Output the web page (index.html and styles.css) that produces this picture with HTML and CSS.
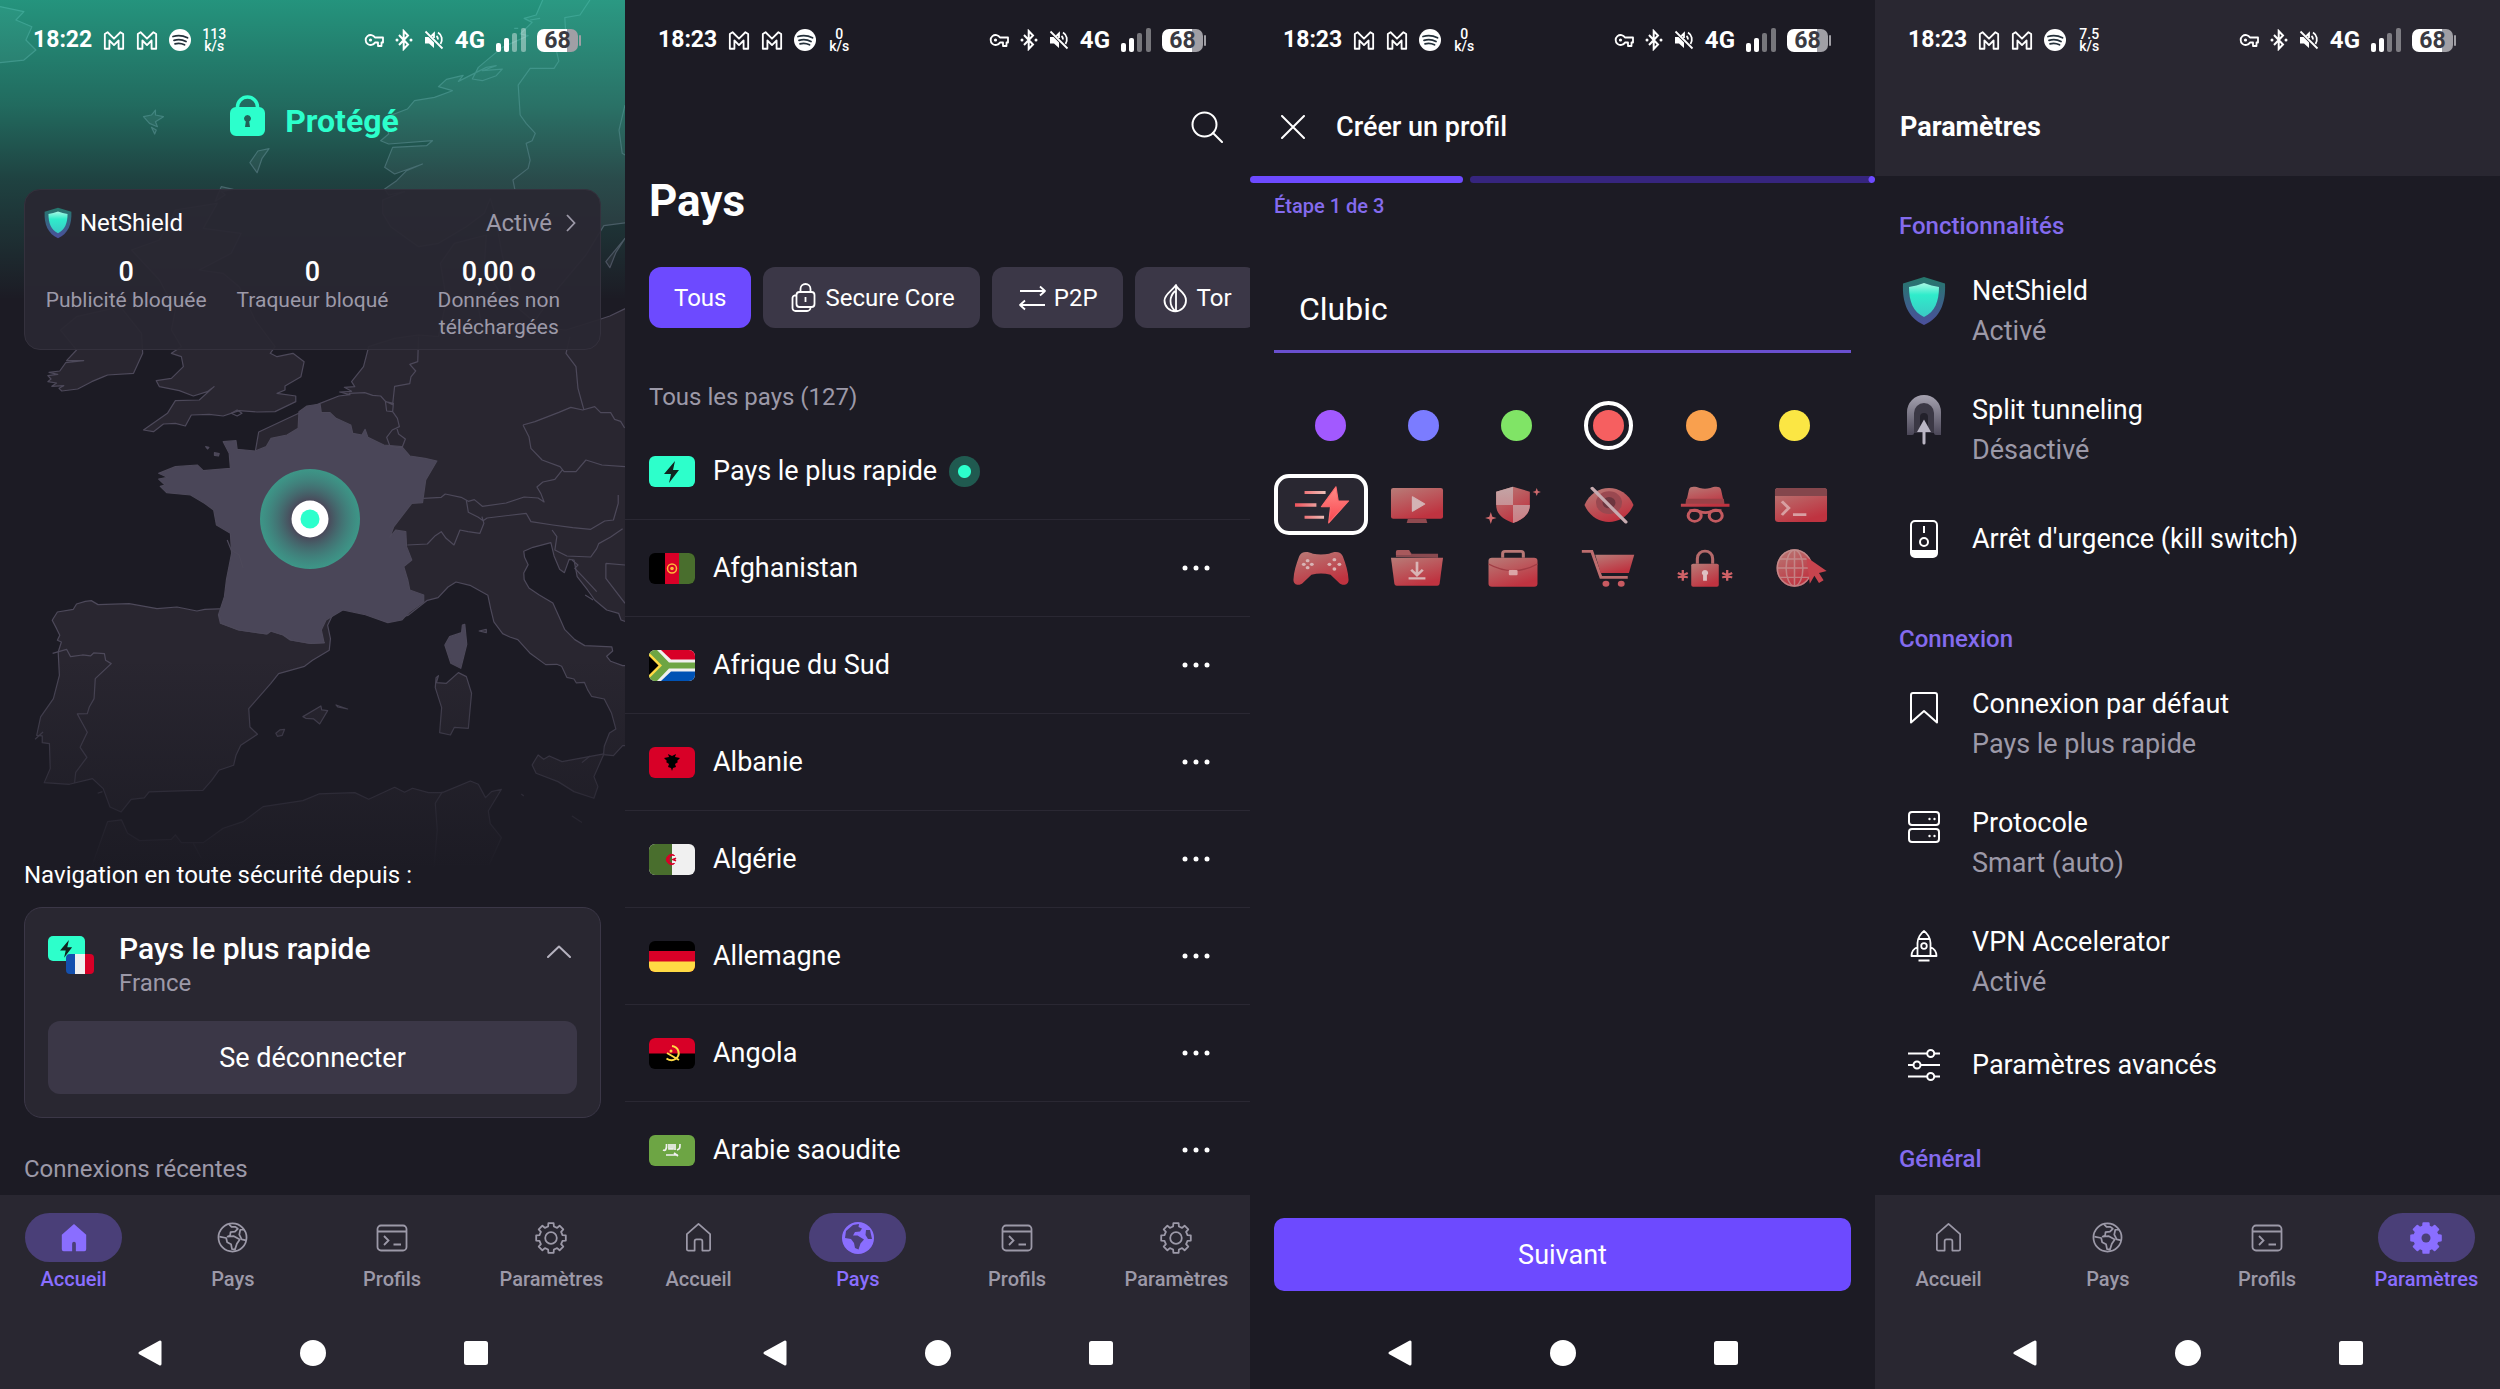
FILE: index.html
```html
<!DOCTYPE html>
<html lang="fr">
<head>
    <meta charset="UTF-8">
    <meta name="viewport" content="width=device-width, initial-scale=1.0">
    <title>Proton VPN</title>
    <link rel="stylesheet" href="styles.css">
</head>
<body>
    <!-- Shared icons -->
    <svg class="sprite" aria-hidden="true">
        <defs>
            <linearGradient id="shieldOuter" x1="0" y1="0" x2="0" y2="1"><stop offset="0" stop-color="#25786c"/><stop offset="1" stop-color="#4b4f9c"/></linearGradient>
            <linearGradient id="shieldInner" x1="0" y1="0" x2="0" y2="1"><stop offset="0" stop-color="#a9f7e4"/><stop offset=".35" stop-color="#2feccb"/><stop offset="1" stop-color="#3bc9c4"/></linearGradient>
            <linearGradient id="tunnel" x1="0" y1="0" x2="0" y2="1"><stop offset="0" stop-color="#a5a2b0"/><stop offset="1" stop-color="#4b4758"/></linearGradient>
            <linearGradient id="red" x1="0" y1="0" x2=".5" y2="1"><stop offset="0" stop-color="#b87c78"/><stop offset="1" stop-color="#bf3340"/></linearGradient>
            <linearGradient id="pink" x1="0" y1="0" x2="0" y2="1"><stop offset="0" stop-color="#c3a5a6"/><stop offset="1" stop-color="#cb7d83"/></linearGradient>
            <linearGradient id="bolt" x1="0" y1="0" x2="0" y2="1"><stop offset="0" stop-color="#ff8d88"/><stop offset="1" stop-color="#f9454f"/></linearGradient>
            <linearGradient id="speed" x1="0" y1="0" x2="1" y2="0"><stop offset="0" stop-color="#f0525b"/><stop offset="1" stop-color="#ecc0b9"/></linearGradient>
        </defs>

        <symbol id="i-gmail" viewBox="0 0 24 22"><path d="M2 20V4l3-2 7 7 7-7 3 2v16h-5V11l-5 5-5-5v9z" fill="none" stroke="currentColor" stroke-width="2" stroke-linejoin="round"/></symbol>
        <symbol id="i-spotify" viewBox="0 0 22 22"><circle cx="11" cy="11" r="11" fill="currentColor"/><path d="M4 7.500c5-1.500 10-1 14.500 1.300M5 11.300c4-1.200 8.500-.8 12 1.200M6 14.800c3.500-.9 6.500-.6 9.500 1" fill="none" stroke="#24303a" stroke-width="1.800" stroke-linecap="round"/></symbol>
        <symbol id="i-key" viewBox="0 0 20 16"><path d="M11 5.500A5 5 0 1 0 11 10.500h3V14h3.500v-3.500H19v-5z" fill="none" stroke="currentColor" stroke-width="1.800" stroke-linejoin="round"/><circle cx="6.500" cy="8" r="1.600" fill="currentColor"/></symbol>
        <symbol id="i-bluetooth" viewBox="0 0 18 22"><path d="M4 6l9 9.500-4.300 4.500V2L13 6.500 4 16" fill="none" stroke="currentColor" stroke-width="2"/><circle cx="2" cy="11" r="1.500" fill="currentColor"/><circle cx="16" cy="11" r="1.500" fill="currentColor"/></symbol>
        <symbol id="i-mute" viewBox="0 0 20 20"><path d="M1 7h3.500L10 12.500V18l-5-4.500H1z" fill="currentColor"/><path d="M1.500 1.500l17 17M12.500 6c1 .8 1.500 2 1.500 3.500M14 2.500c4 2.500 5 7.500 2.500 11.500M7.500 6 10 3.500V8" fill="none" stroke="currentColor" stroke-width="1.800"/></symbol>
        <symbol id="i-signal" viewBox="0 0 30 24"><rect x="0" y="15" width="5" height="9" rx="2" fill="currentColor"/><rect x="8" y="10" width="5" height="14" rx="2" fill="currentColor"/><rect x="16" y="5" width="5" height="19" rx="2" fill="currentColor" opacity=".4"/><rect x="25" y="0" width="5" height="24" rx="2" fill="currentColor" opacity=".4"/></symbol>

        <symbol id="i-lock" viewBox="0 0 35 52"><path d="M7.500 15v-3a10 10 0 0 1 20 0v3" fill="none" stroke="currentColor" stroke-width="3.500"/><path fill-rule="evenodd" d="M6 12h23a6 6 0 0 1 6 6v17a6 6 0 0 1-6 6H6a6 6 0 0 1-6-6V18a6 6 0 0 1 6-6zm11.500 8a3.500 3.500 0 0 0-1.700 6.500L15 32h5l-.8-5.500A3.500 3.500 0 0 0 17.500 20z" fill="currentColor"/></symbol>
        <symbol id="i-shield" viewBox="0 0 44 50"><path d="M22 1 43 7.500C44 27 38 42 22 49 6 42 0 27 1 7.500z" fill="url(#shieldOuter)"/><path d="M22 7c5 2 10 3 15 4 0 14-4 25-15 30C11 36 7 25 7 11c5-1 10-2 15-4z" fill="url(#shieldInner)"/></symbol>
        <symbol id="i-right" viewBox="0 0 10 18"><path d="M1 1l7.500 8L1 17" fill="none" stroke="currentColor" stroke-width="1.800"/></symbol>
        <symbol id="i-up" viewBox="0 0 24 13"><path d="M1 12 12 1.500 23 12" fill="none" stroke="currentColor" stroke-width="2" stroke-linecap="round" stroke-linejoin="round"/></symbol>
        <symbol id="i-search" viewBox="0 0 32 32"><circle cx="13.500" cy="13.500" r="12" fill="none" stroke="currentColor" stroke-width="2"/><path d="M22 22l9 9" stroke="currentColor" stroke-width="2" stroke-linecap="round"/></symbol>
        <symbol id="i-close" viewBox="0 0 24 24"><path d="M1 1l22 22M23 1 1 23" stroke="currentColor" stroke-width="2" stroke-linecap="round"/></symbol>
        <symbol id="i-more" viewBox="0 0 28 6"><circle cx="3" cy="3" r="2.500" fill="currentColor"/><circle cx="14" cy="3" r="2.500" fill="currentColor"/><circle cx="25" cy="3" r="2.500" fill="currentColor"/></symbol>

        <symbol id="i-core" viewBox="0 0 30 30"><g fill="none" stroke="currentColor" stroke-width="1.800"><rect x="8.500" y="9" width="18" height="15" rx="3"/><path d="M12.500 9V6a5 5 0 0 1 10 0v3M8 12.500H6.500a3 3 0 0 0-2 3V25a3 3 0 0 0 3 3H19a3.500 3.500 0 0 0 3.500-3.500M17.500 14v5"/></g></symbol>
        <symbol id="i-p2p" viewBox="0 0 30 30"><path d="M3 8h25M23 3.500 28 8l-5 4.500M28 22H3M8 17.500 3 22l5 4.500" fill="none" stroke="currentColor" stroke-width="1.800" stroke-linejoin="round"/></symbol>
        <symbol id="i-tor" viewBox="0 0 30 30"><path d="M16 2c1 5 10 7 10 15.500a10.700 10.700 0 0 1-21.500 0C4.500 11 12 8 16 2zM16 2v26M15 8c-6 6-6 14 0 20" fill="none" stroke="currentColor" stroke-width="1.800" stroke-linejoin="round"/></symbol>

        <symbol id="i-home" viewBox="0 0 32 32"><path d="M4 12.500 16 2l12 10.500V28a1.500 1.500 0 0 1-1.500 1.500H20V20a2 2 0 0 0-2-2h-4a2 2 0 0 0-2 2v9.500H5.500A1.500 1.500 0 0 1 4 28z" fill="none" stroke="currentColor" stroke-width="1.800" stroke-linejoin="round"/></symbol>
        <symbol id="i-home-on" viewBox="0 0 32 32"><path d="M3 12.500 16 1l13 11.500V28a2 2 0 0 1-2 2h-9v-8a2 2 0 0 0-4 0v8H5a2 2 0 0 1-2-2z" fill="currentColor"/></symbol>
        <symbol id="i-globe" viewBox="0 0 32 32"><g fill="none" stroke="currentColor" stroke-width="1.800" stroke-linejoin="round"><circle cx="16" cy="16" r="14.500"/><path d="M12.500 2.500 15 5h4l2.500 2-3 3-4.500.5-.5 3.500-2.500 1 6-.5 6.500 3.500-3 4.500-2 6-3-.5-1-5-4-2-1-4.500-7-1.500M28 8h-4l-1 5 2.500 5 4.500 1"/></g></symbol>
        <symbol id="i-globe-on" viewBox="0 0 32 32"><circle cx="16" cy="16" r="16" fill="currentColor"/><path d="M17 2l-6 1-7 6-1 7 6 1 3 4 1 5 3.500 1.500 2-6 3.500-4-6.500-4H11l2-3.500 5-.5 2-3-3.500-1.500zM28 8h-4l-.5 5 2.500 4h4z" fill="#4a3f78"/></symbol>
        <symbol id="i-terminal" viewBox="0 0 32 32"><g fill="none" stroke="currentColor" stroke-width="1.800"><rect x="1.500" y="3.500" width="29" height="25" rx="3.500"/><path d="M1.500 9.500h29M8 14l4.500 4.500L8 23M17.500 22.500H25"/></g></symbol>
        <symbol id="i-gear" viewBox="-16 -16 32 32"><path d="M-2.900-11.500-2.600-14.800H2.600L2.900-11.500 6.100-10.100 8.600-12.300 12.300-8.600 10.100-6.100 11.500-2.900 14.800-2.600V2.600L11.500 2.900 10.100 6.100 12.300 8.600 8.600 12.300 6.100 10.100 2.900 11.500 2.600 14.800H-2.600L-2.900 11.500-6.100 10.100-8.600 12.300-12.300 8.600-10.100 6.100-11.500 2.900-14.800 2.600V-2.600L-11.500-2.900-10.100-6.100-12.300-8.600-8.600-12.300-6.100-10.100z" fill="none" stroke="currentColor" stroke-width="1.800" stroke-linejoin="round"/><circle r="5.800" fill="none" stroke="currentColor" stroke-width="1.800"/></symbol>
        <symbol id="i-gear-on" viewBox="-16 -16 32 32"><path d="M-2.900-11.500-2.600-14.800H2.600L2.900-11.500 6.100-10.100 8.600-12.300 12.300-8.600 10.100-6.100 11.500-2.900 14.800-2.600V2.600L11.500 2.900 10.100 6.100 12.300 8.600 8.600 12.300 6.100 10.100 2.900 11.500 2.600 14.800H-2.600L-2.900 11.500-6.100 10.100-8.600 12.300-12.300 8.600-10.100 6.100-11.500 2.900-14.800 2.600V-2.600L-11.500-2.900-10.100-6.100-12.300-8.600-8.600-12.300-6.100-10.100z" fill="currentColor" stroke="currentColor" stroke-width="2" stroke-linejoin="round"/><circle r="4.500" fill="#4a3f78"/></symbol>

        <symbol id="i-back" viewBox="0 0 26 28"><path d="M3 14 23 3v22z" fill="currentColor" stroke="currentColor" stroke-width="3" stroke-linejoin="round"/></symbol>
        <symbol id="i-circle" viewBox="0 0 26 26"><circle cx="13" cy="13" r="13" fill="currentColor"/></symbol>
        <symbol id="i-square" viewBox="0 0 26 26"><rect x="1" y="1" width="24" height="24" rx="2.500" fill="currentColor"/></symbol>

        <symbol id="i-tunnel" viewBox="0 0 34 50"><path d="M0 40V17a17 17 0 0 1 34 0v23h-5a2 2 0 0 1-2-2H7a2 2 0 0 1-2 2z" fill="url(#tunnel)"/><path d="M7 40V18a10 10 0 0 1 20 0v22z" fill="#3b3845"/><path d="M13 34V22a4 4 0 0 1 8 0v12z" fill="#23212b"/><path d="M7 38h20v4H7z" fill="#1c1b24"/><path d="M17 24.500 24 37h-5.500v11a1.500 1.500 0 0 1-3 0V37H10z" fill="#bab6c4"/></symbol>
        <symbol id="i-kill" viewBox="0 0 28 38"><rect x="1" y="1" width="26" height="36" rx="4" fill="none" stroke="currentColor" stroke-width="2"/><path d="M1 30h26v4a3 3 0 0 1-3 3H4a3 3 0 0 1-3-3zM13 6h2v7h-2z" fill="currentColor"/><circle cx="14" cy="22" r="4" fill="none" stroke="currentColor" stroke-width="2"/></symbol>
        <symbol id="i-bookmark" viewBox="0 0 28 32"><path d="M1 30.500V3a2 2 0 0 1 2-2h22a2 2 0 0 1 2 2v27.500L14 19z" fill="none" stroke="currentColor" stroke-width="2" stroke-linejoin="round"/></symbol>
        <symbol id="i-servers" viewBox="0 0 32 32"><g fill="none" stroke="currentColor" stroke-width="2"><rect x="1" y="1" width="30" height="13" rx="3"/><rect x="1" y="18" width="30" height="13" rx="3"/></g><g fill="currentColor"><circle cx="21.500" cy="8" r="1.200"/><circle cx="26.500" cy="8" r="1.200"/><circle cx="21.500" cy="25" r="1.200"/><circle cx="26.500" cy="25" r="1.200"/></g></symbol>
        <symbol id="i-rocket" viewBox="0 0 28 32"><g fill="none" stroke="currentColor" stroke-width="1.800" stroke-linejoin="round"><path d="M7.500 26V13C7.500 8 11 3 14 1c3 2 6.500 7 6.500 12v13zM9 9h10M7.500 17C4 18.500 1.500 21 1.500 26h6M20.500 17c3.500 1.500 6 4 6 9h-6M8.500 30.500h11"/><circle cx="14" cy="16" r="2.800"/></g></symbol>
        <symbol id="i-sliders" viewBox="0 0 32 32"><g fill="none" stroke="currentColor" stroke-width="2"><path d="M0 4.500h19M26 4.500h6M0 16h5.500M12.500 16H32M0 27.500h19M26 27.500h6"/><circle cx="22.700" cy="4.500" r="3.500"/><circle cx="9" cy="16" r="3.500"/><circle cx="22.700" cy="27.500" r="3.500"/></g></symbol>

        <symbol id="f-fast" viewBox="0 0 46 31"><path d="M0 0h46v31H0z" fill="#2dffcb"/><path d="M26 5 15 18h7l-2 9 10-13h-6z" fill="#10251f"/></symbol>
        <symbol id="f-fr" viewBox="0 0 28 20"><path d="M0 0h10v20H0z" fill="#1450ae"/><path d="M9 0h10v20H9z" fill="#f0f0f0"/><path d="M19 0h9v20h-9z" fill="#d80027"/></symbol>
        <symbol id="f-af" viewBox="0 0 46 31"><path d="M0 0h46v31H0z"/><path d="M16 0h14v31H16z" fill="#d80027"/><path d="M30 0h16v31H30z" fill="#496e2d"/><circle cx="23" cy="15.500" r="4.500" fill="none" stroke="#ffb43a" stroke-width="1.500"/><circle cx="23" cy="15.500" r="1.800" fill="#ffb43a"/></symbol>
        <symbol id="f-za" viewBox="0 0 46 31"><path d="M0 0h46v31H0z" fill="#f0f0f0"/><path d="M12 0h34v9.500H22z" fill="#d80027"/><path d="M12 31h34v-9.500H22z" fill="#0052b4"/><path d="M0 0h8l12 12.500h26v6H20L8 31H0z" fill="#6da544"/><path d="M0 2.500 13 15.500 0 28.500z" fill="#ffda44"/><path d="M0 6l9.500 9.500L0 25z"/></symbol>
        <symbol id="f-al" viewBox="0 0 46 31"><path d="M0 0h46v31H0z" fill="#d80027"/><path d="M19 7l2 1 2 1 2-1 2-1-1 3 5 1-3 3 1 1-3 2 1 3-3 1-1 3-1-3-3-1 1-3-3-2 1-1-3-3 5-1z"/></symbol>
        <symbol id="f-dz" viewBox="0 0 46 31"><path d="M0 0h46v31H0z" fill="#f0f0f0"/><path d="M0 0h23v31H0z" fill="#496e2d"/><path d="M25.500 11.500a5 5 0 1 0 0 8 4.200 4.200 0 1 1 0-8z" fill="#d80027" stroke="#d80027"/><path d="M23 15.500l4-1.500-1 1.500 1 1.500z" fill="#d80027" stroke="#d80027"/></symbol>
        <symbol id="f-de" viewBox="0 0 46 31"><path d="M0 0h46v31H0z"/><path d="M0 10h46v21H0z" fill="#d80027"/><path d="M0 20.500h46V31H0z" fill="#ffda44"/></symbol>
        <symbol id="f-ao" viewBox="0 0 46 31"><path d="M0 0h46v31H0z"/><path d="M0 0h46v15.500H0z" fill="#d80027"/><path d="M23 8c7 1 9 9 3.500 13-3 2-6 1.500-9-.5M18 15l12 7" fill="none" stroke="#ffda44" stroke-width="2"/><circle cx="22" cy="13" r="1.500" fill="#ffda44"/></symbol>
        <symbol id="f-sa" viewBox="0 0 46 31"><path d="M0 0h46v31H0z" fill="#6da544"/><path d="M14 15c2 1 4 0 3.500-6M20 9v5h4V9M22 9v5M26 9v6M31 9c0 4 0 5-3 6M17 20h12M25 18l4 3" fill="none" stroke="#f0f0f0" stroke-width="1.700"/></symbol>
    </svg>

    <div class="screens">

        <!-- Accueil -->
        <section class="phone home">
            <!-- Europe map behind the page -->
            <svg class="map" viewBox="0 0 625 868" preserveAspectRatio="xMidYMin slice" aria-hidden="true">
                <defs>
                    <linearGradient id="mapTop" x1="0" y1="0" x2="0" y2="1"><stop offset="0" stop-color="#2cffcc" stop-opacity=".53"/><stop offset=".35" stop-color="#2cffcc" stop-opacity=".35"/><stop offset=".6" stop-color="#2cffcc" stop-opacity=".17"/><stop offset="1" stop-color="#2cffcc" stop-opacity="0"/></linearGradient>
                    <linearGradient id="mapBottom" x1="0" y1="0" x2="0" y2="1"><stop offset="0" stop-color="#1c1b24" stop-opacity="0"/><stop offset="1" stop-color="#1c1b24"/></linearGradient>
                    <radialGradient id="pulse"><stop offset=".35" stop-color="#2cffcc" stop-opacity="0"/><stop offset="1" stop-color="#35c7a4" stop-opacity=".62"/></radialGradient>
                </defs>
                <g class="land" transform="translate(0 350) scale(.3986 .3333)">
                    <path d="M803 160l47-22 28-4-26-8 30-2-18-12 26-2-8-15 30-45 13-60 65-25 60-10 50 5 20-110-15-110 35-60 80-25-5 95 35 70-50 50 10 70 90-10 120 10 80-30 30-12 40-23h60V815h-60l-12-5-6-20-30-10-30-30-18-30-26-40-8-50-12-2-12 40-12-10-14-40-8-40-45 14-23 12 2 18 9 22-11 25 1 20 12 25 25 20 35 25 15 40 15 40 25 30 25 18 68 4 2 12-15 16 10 15 30 13h60v240h-60l-23 30-25-3 2-25 13-40 16-12-11-48-18-42-32-8-10-20-8-22-20 2-6-12-18-5-13-33-12-6-28 1-40-35-30-40-20-8-18-10-22-35-8-40-7-40-45-30-35-10-20 15-25 32-27 8-48 45-35 8-60-25-53-13-42 30-12 30 7 40-3 35-42 30-20 18-65 22-8 12-12 18-55 75 3 55 19 22-42 33-12 30-6 30-37 15-18 30-22 30-40 1-95 4-12 18-33 4-25 38-28-15-17-55-27-30-58 17-63-5 15-42-2-75-18-3v-20l-14-2 10-55 32-55 15-70-3-70 8-30-10-5 6-15-8-20-11-25 13-25 40-8 8-16 22-8 15-2 17 12 78-3 70 15 50-5 50 12 20-5 50-2 15-50 70-480z"/>
                    <path d="M360 240l25 5 25-23 30-2 25 8 15-33 45-2 35 5 40-16 45 4 45-1 52-30v-17l-47-8 20-10v-12l40-28 8-45-28-25-40 10-17-10 12-20-50-80-40-100-40-40-60-10 80-50 25-60-95-15 35-75-105 20-40 90-70 30 70 90 40 90-10 60 25 50-25 20 25 10 5 30-30 35-38 7 8 18 50 12 35 16 35-13 17-15-37 40-60 2-20 38z"/>
                    <path d="M355-50l3 60-23 60-65 5-10 5-30 15-35 22-40 6-7-8 12-8-30 2 12-10-22-4 8-8-8-10 25-4-22-6 27-4 15-25 45-6-43 0 25-32-40-60 40-40 110-30z"/>
                    <path d="M1095 998l25 2 30-32 20 12 13 50-8 105-35-3-10 23-27-7 5-75-16-60 2-30 6-6z"/>
                    <path d="M1350 1215l14 13 14-10 32 17 105-23-25 68 10 30-10 35-50-20-40-30-55-25-10-25zM760 1100l45-32 2 12 15 2-20 40-15-15-20-2zM843 1065l29 12-25-6zM692 1150l10-10 12-2-6 18-12 3zM1202 843l18-5v10z"/>
                    <path d="M230 1550l40-135 35-5 15 40 30 22 80-4 10-13 15 23h55l50-43 50-20 50-45 100-18 40-20 90-4 35 20 65-36 25 15 20-12 40 13h35l70-35 20 10 18 40 15-18 25-7-33 65 5 38 28 42-30 80z"/>
                    <g transform="translate(0 -1050)">
                        <path d="M-20 15l20 5 60 15-20 25 40 20-15 40 25 30-30 30-60 8-20 2zM360 350l20-5 10-15v15l20 5-20 15 5 15-20-10zM380 382l12 8-4 12zM627 488l20-35 28-7-18 30-12 42zM555 560l30 8-30 6 10 10-25 20z"/>
                        <path d="M1365-10l-20 55-30 10 20 12-30 35 20 5-65 35-60 60-15 35 25 5 35-15 15-20-50 5 35-15-25 5-70 42 12-18-42 12-20 22 35 12-45 20-50 10-18 25-55 25 8 50-20 20 20 10 110-10-15 15-85 5-20 60 25 20 70-30-40 20-25 30-30 25 10 18 40-10-55 25v40l20 40 70 60 50-10 70-50 45-40 15-45 10 40 20 130 30 150 50 50 60-100 70-100 45-88 62-10h60V-10z"/>
                        <path d="M1568 715l-38 55-10 15 10 18 15-45z"/>
                    </g>
                    <path class="france" d="M803 162l-33 6-20 17-2 50-28 20-40 10-12 25-28 13-45-5-3-26-32 3 15 35 3 45-68 7-15-17-55 5-42 20 22 12-22 5 16 18-12 4 16 19 60 7 35 25 23 20 7 45 35 25 3 60-13 80-5 50-15 55 5 25 45 20 70 12 10-9 32 12 18 15 50 10 35-2-7-38 12-30 42-30 53 13 60 25 35-8 20-25 35-30v-20l-35-15-5-30-10-40 20-20-13-40-2-45-25-5-15 22 10-32 45-70 27-2 8-68 28-57-30-8-38-7-20-28-45-5-40-23-7-24-8 17-23-5-5-25-37-20-15-17-22-1zM1160 825l6-2 5 60-15 72-25-15-15-55 12-25 30-12zM516 290l8 2-3 5zM538 308l12 3-2 7-10-2z"/>
                    <path class="border" d="M550 795l5 25 45 20 70 12 10-9 32 12 18 15 50 10 35-2M132 910l35-12 10 22 30-5 20 3 8-9 27 2 3 20 14 10-40 45-3 60-12 25-5 20-25 1 25 55-18 45 17 30-28 45-3 32M245 1330l12-5M875 130l40-2 20 8 20 2 12 16 18 10 5-55 38-8 3-20 12-18-15-20 20-8 2-75M967 155l20 5-2 25-15-2zM985 185l12 20 5 25-18 10-14 22 8 26 16 4 15 0 8-25-17-15-5-20M1062 445l45-3 10-10 40 10 18 12 15-5 20 20 60-10 45-18 35 3 15 12-8-25-10-20 15-15 30-8 20-30M1170 452l5 35 25 15 12 10 10-8 98-14 12 25 55 10 50 8 45 5 35-25 22-3 12-50v-25M1312 225l30-10 60-28 30-15 30 8 30-10 15 18 25 0 10 20 15 6 10 20M1465 180l-15-65-5-65-25-40 10-50M1312 225l15 35 5 35 28 35 45 20 10 15 30 0 25-35 40 15 60 5M1022 585l50-3 20-25 15-12 12 20 20 20 15-45 20 5 30 5 10-30-5-20M1385 540l12 20-5 40 30 18 60 3 15-25 5-15 30-20 30-25M1520 640l48 5M1520 640v45l48 75M1110 1325l-18 35 5 80-8 110M485 1480l20 45"/>
                    <path class="border" d="M570 570l10 30 20 15 10 40M1435 630l15 15-8 10 20 25 35 45M1468 735l20 15M1480 1218l-20 20M88 1168l20-22M1435 1398l25 20M1308 1332l6 6M580 190l15-10 12 10-12 8z"/>
                    <g transform="translate(0 -1050)"><path class="border" d="M1480 0l-25 45-38 8 2 40-25 50 8 40-12 22-60 0-30 50 5 90 15 25 23 30-8 22-15 8 10 50-5 25-38 35 5 30M1568 315l-15 75 8 70 7 5M1330 60l25-5M1290 85l10 0"/></g>
                </g>
                <rect width="625" height="300" fill="url(#mapTop)"/>
                <rect y="660" width="625" height="208" fill="url(#mapBottom)"/>
                <circle cx="310" cy="519" r="50" fill="url(#pulse)"/>
                <circle cx="310" cy="519" r="18.500" fill="#fff"/>
                <circle cx="310" cy="519" r="9.500" fill="#2cffcc"/>
            </svg>

            <div class="status">
                <span class="time">18:22</span>
                <svg width="22" height="21"><use href="#i-gmail"/></svg>
                <svg width="22" height="21"><use href="#i-gmail"/></svg>
                <svg width="22" height="22"><use href="#i-spotify"/></svg>
                <span class="speed">113<br>k/s</span>
                <svg class="push" width="20" height="16"><use href="#i-key"/></svg>
                <svg width="18" height="22"><use href="#i-bluetooth"/></svg>
                <svg width="20" height="20"><use href="#i-mute"/></svg>
                <span class="network">4G</span>
                <svg width="30" height="24"><use href="#i-signal"/></svg>
                <span class="battery">68</span>
            </div>

            <main class="content">
                <div class="protected"><svg width="35" height="52"><use href="#i-lock"/></svg><h1>Protégé</h1></div>
                <section class="netshield">
                    <div class="netshield-head">
                        <svg width="28" height="32"><use href="#i-shield"/></svg>
                        <span>NetShield</span>
                        <a href="#netshield">Activé <svg width="10" height="18"><use href="#i-right"/></svg></a>
                    </div>
                    <div class="stats">
                        <div><strong>0</strong><span>Publicité bloquée</span></div>
                        <div><strong>0</strong><span>Traqueur bloqué</span></div>
                        <div><strong>0,00 o</strong><span>Données non<br>téléchargées</span></div>
                    </div>
                </section>

                <p class="from">Navigation en toute sécurité depuis :</p>
                <section class="connection">
                    <div class="connection-head">
                        <div class="flags">
                            <svg class="flag-fast" width="37" height="25"><use href="#f-fast"/></svg>
                            <svg class="flag-small" width="28" height="20"><use href="#f-fr"/></svg>
                        </div>
                        <div>
                            <h2>Pays le plus rapide</h2>
                            <p>France</p>
                        </div>
                        <button class="icon-btn" aria-label="Déplier"><svg width="24" height="13"><use href="#i-up"/></svg></button>
                    </div>
                    <button class="btn btn-weak">Se déconnecter</button>
                </section>
                <p class="recent">Connexions récentes</p>
            </main>

            <nav class="tabs">
                <a class="tab active" href="#accueil"><span class="pill"><svg width="30" height="30"><use href="#i-home-on"/></svg></span>Accueil</a>
                <a class="tab" href="#pays"><span class="pill"><svg width="31" height="31"><use href="#i-globe"/></svg></span>Pays</a>
                <a class="tab" href="#profils"><span class="pill"><svg width="32" height="32"><use href="#i-terminal"/></svg></span>Profils</a>
                <a class="tab" href="#parametres"><span class="pill"><svg width="32" height="32"><use href="#i-gear"/></svg></span>Paramètres</a>
            </nav>
            <div class="system">
                <button class="icon-btn" aria-label="Retour"><svg width="26" height="28"><use href="#i-back"/></svg></button>
                <button class="icon-btn" aria-label="Écran d'accueil"><svg width="26" height="26"><use href="#i-circle"/></svg></button>
                <button class="icon-btn" aria-label="Applications"><svg width="26" height="26"><use href="#i-square"/></svg></button>
            </div>
        </section>

        <!-- Pays -->
        <section class="phone">
            <div class="status">
                <span class="time">18:23</span>
                <svg width="22" height="21"><use href="#i-gmail"/></svg>
                <svg width="22" height="21"><use href="#i-gmail"/></svg>
                <svg width="22" height="22"><use href="#i-spotify"/></svg>
                <span class="speed">0<br>k/s</span>
                <svg class="push" width="20" height="16"><use href="#i-key"/></svg>
                <svg width="18" height="22"><use href="#i-bluetooth"/></svg>
                <svg width="20" height="20"><use href="#i-mute"/></svg>
                <span class="network">4G</span>
                <svg width="30" height="24"><use href="#i-signal"/></svg>
                <span class="battery">68</span>
            </div>

            <main class="content">
                <div class="bar bar-end"><button class="icon-btn" aria-label="Rechercher"><svg width="32" height="32"><use href="#i-search"/></svg></button></div>
                <h1 class="title">Pays</h1>
                <div class="chips">
                    <button class="chip selected">Tous</button>
                    <button class="chip"><svg width="30" height="30"><use href="#i-core"/></svg>Secure Core</button>
                    <button class="chip"><svg width="30" height="30"><use href="#i-p2p"/></svg>P2P</button>
                    <button class="chip"><svg width="30" height="30"><use href="#i-tor"/></svg>Tor</button>
                </div>
                <h2 class="count">Tous les pays (127)</h2>
                <ul class="countries">
                    <li><svg class="flag" width="46" height="31"><use href="#f-fast"/></svg>Pays le plus rapide<span class="live"></span></li>
                    <li><svg class="flag" width="46" height="31"><use href="#f-af"/></svg>Afghanistan<button class="icon-btn" aria-label="Plus"><svg width="28" height="6"><use href="#i-more"/></svg></button></li>
                    <li><svg class="flag" width="46" height="31"><use href="#f-za"/></svg>Afrique du Sud<button class="icon-btn" aria-label="Plus"><svg width="28" height="6"><use href="#i-more"/></svg></button></li>
                    <li><svg class="flag" width="46" height="31"><use href="#f-al"/></svg>Albanie<button class="icon-btn" aria-label="Plus"><svg width="28" height="6"><use href="#i-more"/></svg></button></li>
                    <li><svg class="flag" width="46" height="31"><use href="#f-dz"/></svg>Algérie<button class="icon-btn" aria-label="Plus"><svg width="28" height="6"><use href="#i-more"/></svg></button></li>
                    <li><svg class="flag" width="46" height="31"><use href="#f-de"/></svg>Allemagne<button class="icon-btn" aria-label="Plus"><svg width="28" height="6"><use href="#i-more"/></svg></button></li>
                    <li><svg class="flag" width="46" height="31"><use href="#f-ao"/></svg>Angola<button class="icon-btn" aria-label="Plus"><svg width="28" height="6"><use href="#i-more"/></svg></button></li>
                    <li><svg class="flag" width="46" height="31"><use href="#f-sa"/></svg>Arabie saoudite<button class="icon-btn" aria-label="Plus"><svg width="28" height="6"><use href="#i-more"/></svg></button></li>
                </ul>
            </main>

            <nav class="tabs">
                <a class="tab" href="#accueil"><span class="pill"><svg width="31" height="31"><use href="#i-home"/></svg></span>Accueil</a>
                <a class="tab active" href="#pays"><span class="pill"><svg width="32" height="32"><use href="#i-globe-on"/></svg></span>Pays</a>
                <a class="tab" href="#profils"><span class="pill"><svg width="32" height="32"><use href="#i-terminal"/></svg></span>Profils</a>
                <a class="tab" href="#parametres"><span class="pill"><svg width="32" height="32"><use href="#i-gear"/></svg></span>Paramètres</a>
            </nav>
            <div class="system">
                <button class="icon-btn" aria-label="Retour"><svg width="26" height="28"><use href="#i-back"/></svg></button>
                <button class="icon-btn" aria-label="Écran d'accueil"><svg width="26" height="26"><use href="#i-circle"/></svg></button>
                <button class="icon-btn" aria-label="Applications"><svg width="26" height="26"><use href="#i-square"/></svg></button>
            </div>
        </section>

        <!-- Créer un profil -->
        <section class="phone">
            <div class="status">
                <span class="time">18:23</span>
                <svg width="22" height="21"><use href="#i-gmail"/></svg>
                <svg width="22" height="21"><use href="#i-gmail"/></svg>
                <svg width="22" height="22"><use href="#i-spotify"/></svg>
                <span class="speed">0<br>k/s</span>
                <svg class="push" width="20" height="16"><use href="#i-key"/></svg>
                <svg width="18" height="22"><use href="#i-bluetooth"/></svg>
                <svg width="20" height="20"><use href="#i-mute"/></svg>
                <span class="network">4G</span>
                <svg width="30" height="24"><use href="#i-signal"/></svg>
                <span class="battery">68</span>
            </div>

            <main class="content">
                <div class="bar">
                    <button class="icon-btn close" aria-label="Fermer"><svg width="24" height="24"><use href="#i-close"/></svg></button>
                    <h1 class="bar-title">Créer un profil</h1>
                </div>
                <div class="progress" role="progressbar" aria-valuenow="1" aria-valuemax="3" aria-label="Étape"><span class="done"></span><span class="todo"></span></div>
                <form class="profile">
                    <label class="step" for="profile-name">Étape 1 de 3</label>
                    <input class="name" type="text" id="profile-name" value="Clubic">
                    <div class="colors">
                        <input type="radio" name="color" class="swatch violet" aria-label="Violet">
                        <input type="radio" name="color" class="swatch blue" aria-label="Bleu">
                        <input type="radio" name="color" class="swatch green" aria-label="Vert">
                        <input type="radio" name="color" class="swatch red" aria-label="Rouge" checked>
                        <input type="radio" name="color" class="swatch orange" aria-label="Orange">
                        <input type="radio" name="color" class="swatch yellow" aria-label="Jaune">
                    </div>
                    <div class="icons">
                        <label><input type="radio" name="icon" aria-label="Vitesse" checked>
                            <svg viewBox="0 0 64 48"><g transform="translate(32 24) scale(.3827 .3333) translate(-133 -345)"><path d="M172 290 134 350h24l-5 49 52-66h-27z" fill="url(#bolt)" stroke="#ff6b6e" stroke-width="3" stroke-linejoin="round"/><path d="M90 303h55v9H90zM65 340h56v10H65zM90 377h51v9H90z" fill="url(#speed)"/></g></svg></label>
                        <label><input type="radio" name="icon" aria-label="Streaming">
                            <svg viewBox="0 0 64 48"><g transform="translate(32 24) scale(.3827 .3333) translate(-384 -345)"><rect x="316" y="294" width="136" height="92" rx="6" fill="url(#red)"/><path d="M360 387h48l3 12h-54z" fill="#8f4a50"/><path d="M372 320l32 22-32 22z" fill="#d3b3b5" stroke="#d3b3b5" stroke-width="3" stroke-linejoin="round"/></g></svg></label>
                        <label><input type="radio" name="icon" aria-label="Protection">
                            <svg viewBox="0 0 64 48"><g transform="translate(32 24) scale(.3827 .3333) translate(-635 -345)"><path d="M635 290l44 15v40c0 25-15 42-44 54-29-12-44-29-44-54v-40z" fill="url(#red)"/><path d="M635 290v55h-44v-40zM635 345h44c0 25-15 42-44 54z" fill="url(#pink)"/><path d="M697 294l3 9 8 3-8 3-3 9-3-9-8-3 8-3zM577 366l4 14 11 4-11 4-4 14-4-14-11-4 11-4z" fill="#cf6a6d"/></g></svg></label>
                        <label><input type="radio" name="icon" aria-label="Confidentialité">
                            <svg viewBox="0 0 64 48"><g transform="translate(32 24) scale(.3827 .3333) translate(-886 -345)"><path d="M822 345c25-68 103-68 128 0-25 68-103 68-128 0z" fill="url(#red)"/><circle cx="886" cy="338" r="34" fill="#9a4850"/><circle cx="886" cy="338" r="17" fill="#6d363f"/><path d="M842 295l88 101" stroke="#c7abb0" stroke-width="9" stroke-linecap="round"/></g></svg></label>
                        <label><input type="radio" name="icon" aria-label="Anonyme">
                            <svg viewBox="0 0 64 48"><g transform="translate(32 24) scale(.3827 .3333) translate(-1137 -345)"><path d="M1087 341l8-42c3-12 18-9 28-5 10 3 18 3 28 0 10-4 25-7 28 5l8 42h14v9h-127v-9z" fill="url(#red)"/><path d="M1088 326h98l2 15h-102z" fill="#9b4147"/><g fill="none" stroke="#c45a60" stroke-width="8"><circle cx="1110" cy="377" r="17"/><circle cx="1165" cy="377" r="17"/><path d="M1096 362h16c10 0 12 6 26 6s16-6 26-6h16"/></g></g></svg></label>
                        <label><input type="radio" name="icon" aria-label="Terminal">
                            <svg viewBox="0 0 64 48"><g transform="translate(32 24) scale(.3827 .3333) translate(-1388 -345)"><rect x="1320" y="294" width="136" height="102" rx="9" fill="url(#red)"/><path d="M1320 318v-15q0-9 9-9h118q9 0 9 9v15z" fill="#84464c"/><path d="M1338 334l18 20-18 21M1367 374h35" fill="none" stroke="#d89fa2" stroke-width="8"/></g></svg></label>
                        <label><input type="radio" name="icon" aria-label="Jeux">
                            <svg viewBox="0 0 64 48"><g transform="translate(32 24) scale(.3827 .3333) translate(-133 -535)"><path d="M76 500c5-15 20-16 36-8 14 3 28 3 42 0 16-8 31-7 36 8 8 24 14 46 15 70 0 17-16 20-25 9l-22-24q-25-7-50 0l-22 24c-9 11-25 8-25-9 1-24 7-46 15-70z" fill="url(#red)"/><g fill="#d9b5b6"><circle cx="98" cy="513" r="5"/><circle cx="98" cy="534" r="5"/><circle cx="88" cy="524" r="5"/><circle cx="109" cy="524" r="5"/><circle cx="168" cy="510" r="5"/><circle cx="168" cy="538" r="5"/><circle cx="155" cy="524" r="5"/><circle cx="181" cy="524" r="5"/></g></g></svg></label>
                        <label><input type="radio" name="icon" aria-label="Téléchargement">
                            <svg viewBox="0 0 64 48"><g transform="translate(32 24) scale(.3827 .3333) translate(-384 -535)"><path d="M329 502v-15q0-6 6-6h28l7 11h69v12z" fill="#8a4a50"/><path d="M329 496v-9q0-6 6-6h28l6 15z" fill="#a8595c"/><path d="M316 504h136l-9 79q-1 5-6 5H331q-5 0-6-5z" fill="url(#red)"/><path d="M384 516v38M369 540l15 17 15-17M362 566h44" fill="none" stroke="#d9b5b6" stroke-width="7"/></g></svg></label>
                        <label><input type="radio" name="icon" aria-label="Travail">
                            <svg viewBox="0 0 64 48"><g transform="translate(32 24) scale(.3827 .3333) translate(-635 -535)"><path d="M608 504v-12q0-7 6-7h42q6 0 6 7v12" fill="none" stroke="#b87876" stroke-width="8"/><rect x="571" y="504" width="128" height="87" rx="9" fill="url(#red)"/><path d="M571 523q64 40 128 0" fill="none" stroke="#a13c44" stroke-width="4"/><rect x="624" y="541" width="23" height="16" rx="3" fill="#dba6a7"/></g></svg></label>
                        <label><input type="radio" name="icon" aria-label="Achats">
                            <svg viewBox="0 0 64 48"><g transform="translate(32 24) scale(.3827 .3333) translate(-886 -535)"><path d="M815 485h26l24 78h70" fill="none" stroke="#bd6d6e" stroke-width="8"/><path d="M850 495h102l-14 55h-74z" fill="url(#red)"/><circle cx="878" cy="582" r="9" fill="#c95a61"/><circle cx="918" cy="582" r="9" fill="#c95a61"/></g></svg></label>
                        <label><input type="radio" name="icon" aria-label="Mot de passe">
                            <svg viewBox="0 0 64 48"><g transform="translate(32 24) scale(.3827 .3333) translate(-1137 -535)"><path d="M1117 522v-15c0-30 40-30 40 0v15" fill="none" stroke="#b66a6b" stroke-width="8"/><rect x="1101" y="522" width="72" height="69" rx="5" fill="url(#red)"/><path d="M1137 541a9 9 0 0 0-5 16v16h10v-16a9 9 0 0 0-5-16z" fill="#dfc0c2"/><path d="M1079 541v32M1066 550l26 14M1092 550l-26 14M1195 541v32M1182 550l26 14M1208 550l-26 14" stroke="#cf6267" stroke-width="6"/></g></svg></label>
                        <label><input type="radio" name="icon" aria-label="Web">
                            <svg viewBox="0 0 64 48"><g transform="translate(32 24) scale(.3827 .3333) translate(-1388 -535)"><ellipse cx="1371" cy="535" rx="47" ry="56" fill="url(#red)"/><g fill="none" stroke="#c79a9a" stroke-width="4" opacity=".7"><ellipse cx="1371" cy="535" rx="45" ry="54"/><ellipse cx="1371" cy="535" rx="22" ry="54"/><path d="M1371 480v110M1326 535h90M1332 508h78M1332 563h78"/></g><path d="M1402 502l53 42-20 6 12 22-12 8-12-22-12 24z" fill="#c7444e"/></g></svg></label>
                    </div>
                    <button class="btn btn-primary" type="button">Suivant</button>
                </form>
            </main>

            <div class="system dark">
                <button class="icon-btn" aria-label="Retour"><svg width="26" height="28"><use href="#i-back"/></svg></button>
                <button class="icon-btn" aria-label="Écran d'accueil"><svg width="26" height="26"><use href="#i-circle"/></svg></button>
                <button class="icon-btn" aria-label="Applications"><svg width="26" height="26"><use href="#i-square"/></svg></button>
            </div>
        </section>

        <!-- Paramètres -->
        <section class="phone">
            <header class="raised">
                <div class="status">
                    <span class="time">18:23</span>
                    <svg width="22" height="21"><use href="#i-gmail"/></svg>
                    <svg width="22" height="21"><use href="#i-gmail"/></svg>
                    <svg width="22" height="22"><use href="#i-spotify"/></svg>
                    <span class="speed">7.5<br>k/s</span>
                    <svg class="push" width="20" height="16"><use href="#i-key"/></svg>
                    <svg width="18" height="22"><use href="#i-bluetooth"/></svg>
                    <svg width="20" height="20"><use href="#i-mute"/></svg>
                    <span class="network">4G</span>
                    <svg width="30" height="24"><use href="#i-signal"/></svg>
                    <span class="battery">68</span>
                </div>
                <div class="bar"><h1 class="bar-title strong">Paramètres</h1></div>
            </header>

            <main class="content settings">
                <h2>Fonctionnalités</h2>
                <div class="setting">
                    <span class="setting-icon large"><svg width="44" height="50"><use href="#i-shield"/></svg></span>
                    <div><h3>NetShield</h3><p>Activé</p></div>
                </div>
                <div class="setting">
                    <span class="setting-icon large"><svg width="34" height="50"><use href="#i-tunnel"/></svg></span>
                    <div><h3>Split tunneling</h3><p>Désactivé</p></div>
                </div>
                <div class="setting single">
                    <span class="setting-icon large"><svg width="28" height="38"><use href="#i-kill"/></svg></span>
                    <div><h3>Arrêt d'urgence (kill switch)</h3></div>
                </div>
                <h2>Connexion</h2>
                <div class="setting">
                    <span class="setting-icon"><svg width="28" height="32"><use href="#i-bookmark"/></svg></span>
                    <div><h3>Connexion par défaut</h3><p>Pays le plus rapide</p></div>
                </div>
                <div class="setting">
                    <span class="setting-icon"><svg width="32" height="32"><use href="#i-servers"/></svg></span>
                    <div><h3>Protocole</h3><p>Smart (auto)</p></div>
                </div>
                <div class="setting">
                    <span class="setting-icon"><svg width="28" height="32"><use href="#i-rocket"/></svg></span>
                    <div><h3>VPN Accelerator</h3><p>Activé</p></div>
                </div>
                <div class="setting single">
                    <span class="setting-icon"><svg width="32" height="32"><use href="#i-sliders"/></svg></span>
                    <div><h3>Paramètres avancés</h3></div>
                </div>
                <h2>Général</h2>
            </main>

            <nav class="tabs">
                <a class="tab" href="#accueil"><span class="pill"><svg width="31" height="31"><use href="#i-home"/></svg></span>Accueil</a>
                <a class="tab" href="#pays"><span class="pill"><svg width="31" height="31"><use href="#i-globe"/></svg></span>Pays</a>
                <a class="tab" href="#profils"><span class="pill"><svg width="32" height="32"><use href="#i-terminal"/></svg></span>Profils</a>
                <a class="tab active" href="#parametres"><span class="pill"><svg width="32" height="32"><use href="#i-gear-on"/></svg></span>Paramètres</a>
            </nav>
            <div class="system">
                <button class="icon-btn" aria-label="Retour"><svg width="26" height="28"><use href="#i-back"/></svg></button>
                <button class="icon-btn" aria-label="Écran d'accueil"><svg width="26" height="26"><use href="#i-circle"/></svg></button>
                <button class="icon-btn" aria-label="Applications"><svg width="26" height="26"><use href="#i-square"/></svg></button>
            </div>
        </section>
    </div>
</body>
</html>
```
FILE: styles.css
```css
* {
    box-sizing: border-box;
}
body {
    margin: 0;
    font-family: Roboto, 'Liberation Sans', sans-serif;
    font-size: 24px;
    line-height: 30px;
    color: #fff;
    background: #1c1b24;
}
h1, h2, h3, p, ul {
    margin: 0;
    padding: 0;
    font-weight: 400;
}
button, input {
    font: inherit;
    color: inherit;
    margin: 0;
    border: none;
    background: none;
}
a {
    color: inherit;
    text-decoration: none;
}
svg {
    display: block;
    flex: none;
}
.sprite {
    position: absolute;
    width: 0;
    height: 0;
}
.screens {
    display: grid;
    grid-template-columns: repeat(4, 1fr);
}
.phone {
    position: relative;
    display: flex;
    flex-direction: column;
    height: 100vh;
    min-width: 0;
    overflow: hidden;
    background: #1c1b24;
}
.content {
    position: relative;
    flex: 1;
    display: flex;
    flex-direction: column;
    min-height: 0;
    overflow: hidden;
}

/* status bar */
.status {
    position: relative;
    flex: none;
    display: flex;
    align-items: center;
    gap: 11px;
    height: 80px;
    padding: 0 47px 0 33px;
}
.time {
    font-size: 23px;
    font-weight: 700;
}
.speed {
    min-width: 24px;
    font-size: 14px;
    line-height: 12px;
    font-weight: 500;
    text-align: center;
}
.push {
    margin-left: auto;
}
.network {
    font-weight: 700;
}
.battery {
    position: relative;
    width: 41px;
    height: 23px;
    border-radius: 7px;
    background: linear-gradient(90deg, #fff 72%, #a09fa5 72%);
    color: #3a3a42;
    font-size: 23px;
    font-weight: 700;
    line-height: 24px;
    text-align: center;
}
.battery::after {
    content: "";
    position: absolute;
    left: 42px;
    top: 6px;
    width: 2px;
    height: 11px;
    border-radius: 2px;
    background: #a09fa5;
}

/* home */
.map {
    position: absolute;
    top: 0;
    left: 0;
    width: 100%;
    height: 868px;
}
.land path {
    fill: #292630;
    stroke: #4d495a;
    stroke-width: 1.2px;
    stroke-linejoin: round;
    vector-effect: non-scaling-stroke;
}
.land .france {
    fill: #4a4658;
}
.land .border {
    fill: none;
}
.protected {
    display: flex;
    align-items: center;
    justify-content: center;
    gap: 20px;
    padding: 15px 0 42px 4px;
    color: #2cffcc;
}
.protected h1 {
    font-size: 32px;
    font-weight: 700;
}
.netshield {
    margin: 0 24px;
    padding: 17px 8px 8px;
    border: 1px solid #34313d;
    border-radius: 16px;
    background: rgba(41, 39, 50, 0.94);
}
.netshield-head {
    display: flex;
    align-items: center;
    gap: 8px;
    padding: 0 16px 0 11px;
}
.netshield-head a {
    display: flex;
    align-items: center;
    gap: 14px;
    margin-left: auto;
    color: #9c99a8;
}
.stats {
    display: grid;
    grid-template-columns: repeat(3, 1fr);
    margin-top: 18px;
    text-align: center;
}
.stats strong {
    display: block;
    font-size: 27px;
    font-weight: 500;
}
.stats span {
    display: block;
    font-size: 21px;
    line-height: 27px;
    color: #9c99a8;
}
.from {
    margin: auto 24px 17px;
}
.connection {
    margin: 0 24px;
    padding: 23px;
    border: 1px solid #3b3747;
    border-radius: 18px;
    background: #292731;
}
.connection-head {
    display: flex;
    gap: 25px;
}
.connection-head h2 {
    font-size: 30px;
    line-height: 36px;
    font-weight: 500;
}
.connection-head p {
    line-height: 32px;
    color: #9c99a8;
}
.connection-head .icon-btn {
    align-self: flex-start;
    margin: 14px 6px 0 auto;
    color: #b5b2bf;
}
.flags {
    position: relative;
    width: 46px;
}
.flag-fast {
    margin-top: 5px;
    border-radius: 5px;
}
.flag-small {
    position: absolute;
    left: 18px;
    top: 23px;
    border-radius: 4px;
}
.btn {
    display: block;
    width: 100%;
    height: 73px;
    border-radius: 12px;
    font-size: 27px;
}
.btn-weak {
    margin-top: 22px;
    background: #3b3747;
}
.recent {
    margin: 36px 24px 11px;
    color: #9c99a8;
}

/* bottom navigation */
.tabs {
    position: relative;
    flex: none;
    display: grid;
    grid-template-columns: repeat(4, 1fr);
    gap: 12px;
    height: 122px;
    padding-top: 18px;
    background: #292731;
}
.tab {
    display: flex;
    flex-direction: column;
    align-items: center;
    gap: 5px;
    font-size: 20px;
    line-height: 24px;
    font-weight: 500;
    color: #9c99a8;
}
.pill {
    display: flex;
    align-items: center;
    justify-content: center;
    width: 97px;
    height: 49px;
    border-radius: 25px;
}
.tab.active {
    color: #8a6eff;
}
.tab.active .pill {
    background: #4a3f78;
}
.system {
    position: relative;
    flex: none;
    display: flex;
    align-items: center;
    justify-content: center;
    gap: 137px;
    height: 72px;
    background: #292731;
}
.system.dark {
    background: #1c1b24;
}
.icon-btn {
    padding: 0;
    cursor: pointer;
}

/* countries */
.bar {
    flex: none;
    display: flex;
    align-items: center;
    height: 96px;
    padding: 0 27px 2px 25px;
}
.bar-end {
    justify-content: flex-end;
}
.title {
    margin: 0 24px;
    font-size: 44px;
    line-height: 50px;
    font-weight: 700;
}
.chips {
    flex: none;
    display: flex;
    gap: 12px;
    margin: 41px 0 54px;
    padding-left: 24px;
    overflow: hidden;
}
.chip {
    flex: none;
    display: flex;
    align-items: center;
    gap: 7px;
    height: 61px;
    padding: 0 25px;
    border-radius: 12px;
    background: #3b3747;
}
.chip.selected {
    background: #6d4aff;
}
.count {
    margin: 0 24px 11px;
    font-size: 24px;
    color: #9c99a8;
}
.countries {
    list-style: none;
}
.countries li {
    display: flex;
    align-items: center;
    height: 97px;
    padding: 0 40px 0 24px;
    border-bottom: 1px solid #2a2833;
    font-size: 27px;
}
.countries .icon-btn {
    margin-left: auto;
}
.flag {
    margin-right: 18px;
    border-radius: 6px;
}
.live {
    width: 31px;
    height: 31px;
    margin-left: 12px;
    border-radius: 50%;
    background: radial-gradient(circle, #2cffcc 6px, #205a50 7px);
}

/* profile */
.close {
    margin: 0 31px 0 6px;
}
.bar-title {
    font-size: 27px;
    font-weight: 500;
}
.bar-title.strong {
    font-weight: 700;
}
.progress {
    flex: none;
    display: flex;
    gap: 7px;
    height: 7px;
}
.progress span {
    border-radius: 4px;
}
.progress .done {
    width: 34%;
    background: #6d4aff;
}
.progress .todo {
    flex: 1;
    background: radial-gradient(circle at calc(100% - 3px) 50%, #6d4aff 3px, #36257e 4px);
}
.profile {
    flex: 1;
    display: flex;
    flex-direction: column;
    padding: 11px 24px 26px;
}
.step {
    font-size: 20px;
    line-height: 24px;
    font-weight: 500;
    color: #846bee;
}
.name {
    width: 100%;
    height: 85px;
    margin-top: 50px;
    padding: 0 25px;
    border-bottom: 3px solid #6a50cf;
    outline: none;
    font-size: 32px;
}
.colors {
    display: grid;
    grid-template-columns: repeat(6, 1fr);
    justify-items: center;
    margin: 48px 10px 24px;
}
.swatch {
    appearance: none;
    width: 49px;
    height: 49px;
    border: 9px solid transparent;
    border-radius: 50%;
    background-clip: padding-box;
    cursor: pointer;
}
.swatch:checked {
    border: 4px solid #fff;
    padding: 5px;
    background-clip: content-box;
}
.violet { background-color: #a259ff; }
.blue { background-color: #7b7cff; }
.green { background-color: #80e466; }
.red { background-color: #f65f60; }
.orange { background-color: #f9a04e; }
.yellow { background-color: #fbe644; }
.icons {
    display: grid;
    grid-template-columns: repeat(6, 1fr);
    gap: 2px;
    margin-right: 3px;
}
.icons label {
    position: relative;
    display: flex;
    align-items: center;
    justify-content: center;
    height: 61px;
    border: 4px solid transparent;
    border-radius: 15px;
    cursor: pointer;
}
.icons label:has(:checked) {
    border-color: #fff;
    background: #292731;
}
.icons input {
    position: absolute;
    opacity: 0;
}
.icons svg {
    width: 64px;
    height: 48px;
}
.btn-primary {
    margin-top: auto;
    border-radius: 10px;
    background: #6d4aff;
}

/* settings */
.raised {
    flex: none;
    background: #292731;
}
.settings h2 {
    padding: 36px 24px 12px;
    font-size: 24px;
    line-height: 28px;
    font-weight: 500;
    color: #846bee;
}
.setting {
    display: flex;
    gap: 24px;
    padding: 19px 24px 20px;
}
.setting.single {
    align-items: center;
}
.setting-icon {
    display: flex;
    align-items: center;
    justify-content: center;
    width: 49px;
    height: 48px;
}
.setting-icon.large {
    height: 60px;
}
.setting h3, .setting p {
    font-size: 27px;
    line-height: 40px;
}
.setting p {
    color: #9c99a8;
}
```
